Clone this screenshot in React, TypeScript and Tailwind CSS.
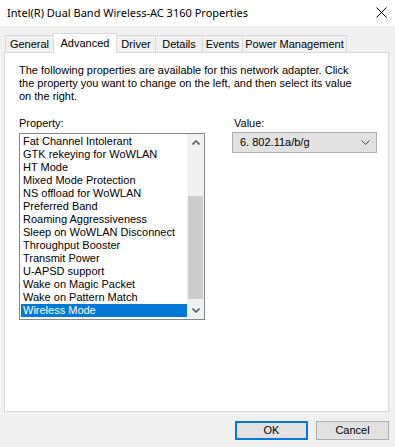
import React from "react";

const items = [
  "Fat Channel Intolerant",
  "GTK rekeying for WoWLAN",
  "HT Mode",
  "Mixed Mode Protection",
  "NS offload for WoWLAN",
  "Preferred Band",
  "Roaming Aggressiveness",
  "Sleep on WoWLAN Disconnect",
  "Throughput Booster",
  "Transmit Power",
  "U-APSD support",
  "Wake on Magic Packet",
  "Wake on Pattern Match",
  "Wireless Mode",
];

const tabs = [
  { label: "General", w: "w-[49px]" },
  { label: "Advanced", w: "w-[64px]", active: true },
  { label: "Driver", w: "w-[40px]" },
  { label: "Details", w: "w-[48px]" },
  { label: "Events", w: "w-[41px]" },
  { label: "Power Management", w: "w-[105px]" },
];

export default function App() {
  const sans = { fontFamily: '"Liberation Sans", Arial, sans-serif' };
  return (
    <div
      className="w-[395px] h-[447px] bg-[#f0f0f0] text-black overflow-hidden text-[11px] leading-[13px]"
      style={sans}
    >
      {/* Title bar */}
      <div className="h-[26px] bg-white flex items-center justify-between pl-[7px] pr-[8px]">
        <span
          className="text-[11px] leading-[16px] text-black"
          style={{ fontFamily: '"Noto Sans", "Open Sans", sans-serif' }}
        >
          Intel(R) Dual Band Wireless-AC 3160 Properties
        </span>
        <svg width="11" height="11" viewBox="0 0 11 11" className="mb-[2px]">
          <path d="M0.5 0.5 L10.5 10.5 M10.5 0.5 L0.5 10.5" stroke="#000" strokeWidth="1" />
        </svg>
      </div>

      {/* Tabs */}
      <div className="mt-[7px] h-[19px] pl-[5px] flex items-end">
        {tabs.map((t) =>
          t.active ? (
            <div
              key={t.label}
              className={`${t.w} h-[20px] -mb-px relative z-10 bg-white border-t border-l border-r border-[#d9d9d9] flex items-start justify-center pt-[3px] -ml-px`}
            >
              {t.label}
            </div>
          ) : (
            <div
              key={t.label}
              className={`${t.w} h-[17px] bg-[#f0f0f0] border-t border-l border-r border-[#d9d9d9] flex items-center justify-center -ml-px first:ml-0`}
            >
              {t.label}
            </div>
          )
        )}
      </div>

      {/* Panel */}
      <div className="ml-[4px] w-[385px] h-[360px] border border-[#d9d9d9] bg-white pl-[14px] pt-[11px]">
        <p>
          The following properties are available for this network adapter. Click
          <br />
          the property you want to change on the left, and then select its value
          <br />
          on the right.
        </p>

        <div className="mt-[14px] flex gap-[27px]">
          <div className="w-[186px]">
            <div className="h-[13px]">Property:</div>
            <div className="mt-[3px] h-[187px] border border-[#828790] flex">
              <div className="flex-1 pt-px pl-px">
                {items.map((it) => (
                  <div
                    key={it}
                    className={`h-[13px] pl-[2px] whitespace-nowrap ${
                      it === "Wireless Mode" ? "bg-[#0078d7] text-white" : ""
                    }`}
                  >
                    {it}
                  </div>
                ))}
              </div>
              <div className="w-[17px] bg-[#f0f0f0] flex flex-col items-center">
                <div className="h-[17px] w-full flex items-center justify-center">
                  <svg width="8" height="5" viewBox="0 0 8 5">
                    <path d="M0.5 4.5 L4 1 L7.5 4.5" stroke="#606060" strokeWidth="1.6" fill="none" />
                  </svg>
                </div>
                <div className="mt-[45px] w-[15px] h-[103px] bg-[#cdcdcd]" />
                <div className="flex-1" />
                <div className="h-[17px] w-full flex items-center justify-center">
                  <svg width="8" height="5" viewBox="0 0 8 5">
                    <path d="M0.5 0.5 L4 4 L7.5 0.5" stroke="#606060" strokeWidth="1.6" fill="none" />
                  </svg>
                </div>
              </div>
            </div>
          </div>

          <div className="w-[145px]">
            <div className="h-[13px] pl-[2px]">Value:</div>
            <div className="mt-[2px] h-[21px] border border-[#adadad] bg-[#e1e1e1] flex items-center justify-between pl-[7px] pr-[6px]">
              <span>6. 802.11a/b/g</span>
              <svg width="9" height="5" viewBox="0 0 9 5">
                <path d="M0.5 0.5 L4.5 4.5 L8.5 0.5" stroke="#404040" strokeWidth="1" fill="none" />
              </svg>
            </div>
          </div>
        </div>
      </div>

      {/* Buttons */}
      <div className="mt-[9px] flex justify-end gap-[8px] pr-[6px]">
        <button className="w-[73px] h-[19px] border-2 border-[#0078d7] bg-[#e1e1e1] flex items-center justify-center text-[11px]">
          OK
        </button>
        <button className="w-[73px] h-[19px] border border-[#adadad] bg-[#e1e1e1] flex items-center justify-center text-[11px]">
          Cancel
        </button>
      </div>
    </div>
  );
}
